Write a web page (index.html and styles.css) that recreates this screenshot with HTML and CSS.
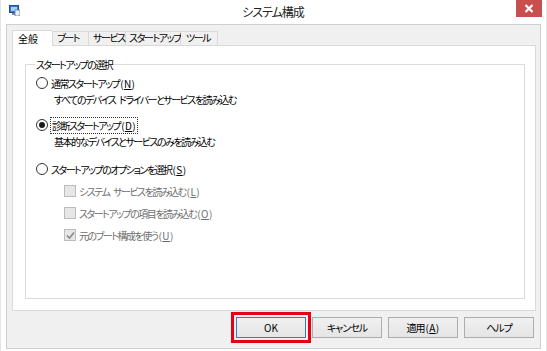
FILE: index.html
```html
<!DOCTYPE html>
<html lang="ja">
<head>
  <meta charset="UTF-8" />
  <title>システム構成</title>
  <link rel="stylesheet" href="styles.css">
</head>
<body>
  <div class="window">
    <div class="titlebar">
      <svg class="app-icon" width="11" height="11" viewBox="0 0 11 11">
        <rect x="0.5" y="0.5" width="9" height="7" fill="#3a78c8" stroke="#1d4f94"/>
        <rect x="2" y="2" width="6" height="4" fill="#9fd0f5"/>
        <rect x="3" y="8" width="4" height="2" fill="#7c8a99"/>
        <rect x="6" y="5" width="5" height="6" fill="#e8eef5" stroke="#6a7d92" stroke-width="0.8"/>
      </svg>
      <div class="title">システム構成</div>
      <div class="close">
        <svg width="10" height="9" viewBox="0 0 10 9"><path d="M1.5 1 L8.5 8 M8.5 1 L1.5 8" stroke="#fff" stroke-width="2.2"/></svg>
      </div>
    </div>

    <div class="client">
      <div class="tabs">
        <div class="tab active">全般</div>
        <div class="tab">ブート</div>
        <div class="tab">サービス</div>
        <div class="tab">スタートアップ</div>
        <div class="tab">ツール</div>
      </div>

      <div class="panel">
        <fieldset class="group">
          <legend>スタートアップの選択</legend>

          <div class="option">
            <span class="radio"></span>
            <span>通常スタートアップ<span class="key">(<u>N</u>)</span></span>
          </div>
          <div class="desc">すべてのデバイス ドライバーとサービスを読み込む</div>

          <div class="option">
            <span class="radio checked"></span>
            <span class="focus">診断スタートアップ<span class="key">(<u>D</u>)</span></span>
          </div>
          <div class="desc">基本的なデバイスとサービスのみを読み込む</div>

          <div class="option">
            <span class="radio"></span>
            <span>スタートアップのオプションを選択<span class="key">(<u>S</u>)</span></span>
          </div>

          <div class="checks">
            <div class="check-row">
              <span class="checkbox"></span>
              <span>システム サービスを読み込む<span class="key">(<u>L</u>)</span></span>
            </div>
            <div class="check-row">
              <span class="checkbox"></span>
              <span>スタートアップの項目を読み込む<span class="key">(<u>O</u>)</span></span>
            </div>
            <div class="check-row">
              <span class="checkbox">
                <svg width="9" height="9" viewBox="0 0 9 9"><path d="M1 4.5 L3.5 7 L8 1.5" fill="none" stroke="#8a8a8a" stroke-width="1.6"/></svg>
              </span>
              <span>元のブート構成を使う<span class="key">(<u>U</u>)</span></span>
            </div>
          </div>
        </fieldset>
      </div>

      <div class="buttons">
        <div class="highlight"><button class="btn default">OK</button></div>
        <button class="btn">キャンセル</button>
        <button class="btn">適用<span class="key">(<u>A</u>)</span></button>
        <button class="btn">ヘルプ</button>
      </div>
    </div>
  </div>
</body>
</html>
```

FILE: styles.css
```css
* {
  margin: 0;
  padding: 0;
  box-sizing: border-box;
  font-family: "Noto Sans CJK JP", "Noto Sans", sans-serif;
  font-feature-settings: "palt";
}

body {
  background: #fff;
  width: 547px;
  height: 351px;
  overflow: hidden;
  font-size: 10px;
  letter-spacing: -1.5px;
  word-spacing: 3px;
  color: #000;
}

.key {
  letter-spacing: 0.4px;
  margin-left: 1px;
}

.window {
  height: 351px;
  padding: 0 5px 2px 5px;
  display: flex;
  flex-direction: column;
  border-left: 1px solid #e4e4e4;
  border-right: 1px solid #e4e4e4;
}

.titlebar {
  height: 24px;
  display: flex;
  align-items: flex-start;
}

.app-icon {
  margin: 5px 0 0 3px;
}

.title {
  flex: 1;
  text-align: center;
  font-size: 12px;
  letter-spacing: -1px;
  line-height: 24px;
  color: #222;
  padding-left: 10px;
}

.close {
  width: 26px;
  height: 17px;
  background: #c7504f;
  display: flex;
  align-items: center;
  justify-content: center;
  margin-right: -1px;
}

.client {
  flex: 1;
  background: #f0f0f0;
  border: 1px solid #cfcfcf;
  padding: 5px 6px 0 5px;
  display: flex;
  flex-direction: column;
}

.tabs {
  display: flex;
  align-items: flex-end;
  height: 15px;
  position: relative;
  z-index: 1;
}

.tab {
  height: 14px;
  border: 1px solid #d9d9d9;
  border-bottom: none;
  border-left: none;
  background: #f0f0f0;
  line-height: 12px;
  padding: 0 4px;
  white-space: nowrap;
  letter-spacing: -1.4px;
}

.tab:nth-child(2) { width: 37px; border-left: 1px solid #d9d9d9; }
.tab:nth-child(3) { width: 37px; }
.tab:nth-child(4) { width: 55px; padding: 0 3px; }
.tab:nth-child(5) { width: 37px; padding-left: 5px; }

.tab.active {
  width: 40px;
  height: 16px;
  margin-bottom: -1px;
  background: #fff;
  border-left: 1px solid #d9d9d9;
  border-right: none;
  padding: 2px 5px 0;
  letter-spacing: 0;
}

.panel {
  width: 524px;
  height: 266px;
  background: #fff;
  border: 1px solid #d9d9d9;
  padding: 12px 10px 0 12px;
}

.group {
  height: 241px;
  border: 1px solid #dcdcdc;
  padding: 5px 0 0 10px;
  width: 500px;
}

.group legend {
  padding: 0 1px;
  margin-left: -1px;
  line-height: 13px;
}

.option {
  display: flex;
  align-items: center;
  gap: 3px;
  height: 14px;
  white-space: nowrap;
}

.radio {
  width: 12px;
  height: 12px;
  border: 1px solid #333;
  border-radius: 50%;
  background: #fff;
  display: flex;
  align-items: center;
  justify-content: center;
}

.radio.checked::after {
  content: "";
  width: 6px;
  height: 6px;
  border-radius: 50%;
  background: #1a1a1a;
}

.focus {
  outline: 1px dotted #333;
  padding: 0 1px;
}

.desc {
  margin: 3px 0 11px 18px;
  height: 14px;
  line-height: 14px;
  white-space: nowrap;
}

.desc + .option + .desc {
  margin-bottom: 13px;
}

.checks {
  margin: 8px 0 0 28px;
  color: #6d6d6d;
  display: flex;
  flex-direction: column;
  gap: 8px;
}

.check-row {
  display: flex;
  align-items: center;
  gap: 3px;
  height: 14px;
  white-space: nowrap;
}

.checkbox {
  width: 12px;
  height: 12px;
  border: 1px solid #bcbcbc;
  background: #e6e6e6;
  display: flex;
  align-items: center;
  justify-content: center;
}

.buttons {
  display: flex;
  justify-content: flex-end;
  align-items: center;
  gap: 6px;
  margin-top: 1px;
}

.highlight {
  border: 3px solid #e60012;
  padding: 2px;
  margin-right: -5px;
}

.btn {
  width: 70px;
  height: 21px;
  border: 1px solid #adadad;
  background: linear-gradient(#f0f0f0, #e5e5e5);
  font-size: 10px;
  letter-spacing: -1px;
  color: #000;
}

.btn.default {
  border-color: #3c7fb1;
  letter-spacing: 0;
}
```
